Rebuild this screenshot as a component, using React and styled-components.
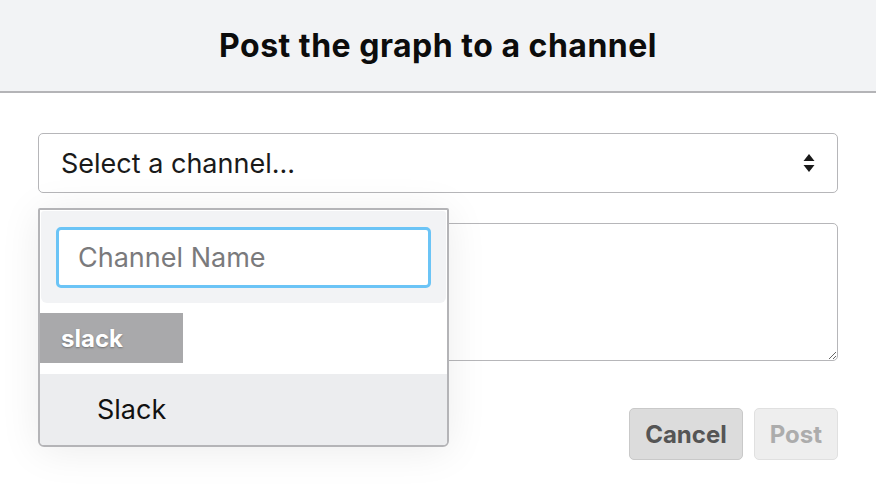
import styled, { createGlobalStyle } from 'styled-components'

const GlobalStyle = createGlobalStyle`
  html, body {
    margin: 0;
    padding: 0;
    background: #fff;
    font-family: Inter, "Liberation Sans", sans-serif;
  }
`

const Modal = styled.div`
  width: 876px;
  height: 494px;
  background: #fff;
  overflow: hidden;
`

const Header = styled.div`
  height: 91px;
  background: #f2f3f5;
  border-bottom: 2px solid #b4b4b7;
  display: flex;
  align-items: center;
  justify-content: center;
`

const Title = styled.h2`
  margin: 0;
  font-size: 32px;
  font-weight: 700;
  color: #0c0c0c;
  letter-spacing: 0.5px;
`

const Body = styled.div`
  padding: 40px 38px 0;
  display: flex;
  flex-direction: column;
`

const Field = styled.div`
  position: relative;
`

const Select = styled.div`
  height: 60px;
  box-sizing: border-box;
  border: 1.5px solid #b6b6b9;
  border-radius: 5px;
  display: flex;
  align-items: center;
  justify-content: space-between;
  padding: 0 22px 0 22px;
  font-size: 27px;
  color: #1a1a1a;
`

const Message = styled.textarea`
  margin-top: 30px;
  height: 138px;
  box-sizing: border-box;
  border: 1.5px solid #b6b6b9;
  border-radius: 5px;
  resize: vertical;
  font: inherit;
  outline: none;
`

const Dropdown = styled.div`
  position: absolute;
  top: 75px;
  left: 0;
  width: 411px;
  box-sizing: border-box;
  background: #fff;
  border: 2px solid #b4b4b7;
  border-radius: 2px 2px 6px 6px;
  box-shadow: 0 4px 40px rgba(0, 0, 0, 0.08);
  overflow: hidden;
`

const SearchArea = styled.div`
  margin: 1px;
  padding: 16px 15px 15px;
  background: #f2f3f5;
  border-radius: 3px 3px 6px 6px;
`

const SearchInput = styled.input`
  display: block;
  width: 100%;
  height: 61px;
  box-sizing: border-box;
  border: 3px solid #6bc4f6;
  border-radius: 5px;
  padding: 0 19px;
  font: inherit;
  font-size: 27px;
  color: #222;
  outline: none;
  background: #fff;

  &::placeholder {
    color: #7a7a7c;
  }
`

const GroupLabel = styled.div`
  margin-top: 10px;
  width: 143px;
  height: 50px;
  background: #a9a9ab;
  color: #fff;
  font-size: 24px;
  font-weight: 700;
  display: flex;
  align-items: center;
  padding-left: 21px;
  box-sizing: border-box;
  text-shadow: 0 1px 2px rgba(0, 0, 0, 0.35);
`

const Option = styled.div`
  margin-top: 11px;
  height: 71px;
  background: #ecedef;
  display: flex;
  align-items: center;
  padding-left: 57px;
  font-size: 27px;
  color: #111;
`

const Actions = styled.div`
  margin-top: 47px;
  display: flex;
  justify-content: flex-end;
  gap: 11px;
`

const Button = styled.button`
  height: 52px;
  padding: 0 15px;
  box-sizing: border-box;
  border-radius: 5px;
  font: inherit;
  font-size: 24px;
  font-weight: 700;
  border: 1.5px solid ${p => (p.$disabled ? '#e0e0e0' : '#c9c9c9')};
  background: ${p => (p.$disabled ? '#eeeeee' : '#dcdcdc')};
  color: ${p => (p.$disabled ? '#acacac' : '#555555')};
`

function Arrows() {
  return (
    <svg width="12" height="20" viewBox="0 0 12 20">
      <path d="M6 1 L11.5 8 H0.5 Z" fill="#1a1a1a" />
      <path d="M6 19 L11.5 12 H0.5 Z" fill="#1a1a1a" />
    </svg>
  )
}

function App() {
  return (
    <>
      <GlobalStyle />
      <Modal>
        <Header>
          <Title>Post the graph to a channel</Title>
        </Header>
        <Body>
          <Field>
            <Select>
              <span>Select a channel...</span>
              <Arrows />
            </Select>
            <Dropdown>
              <SearchArea>
                <SearchInput placeholder="Channel Name" />
              </SearchArea>
              <GroupLabel>slack</GroupLabel>
              <Option>Slack</Option>
            </Dropdown>
          </Field>
          <Message />
          <Actions>
            <Button>Cancel</Button>
            <Button $disabled>Post</Button>
          </Actions>
        </Body>
      </Modal>
    </>
  )
}

export default App
